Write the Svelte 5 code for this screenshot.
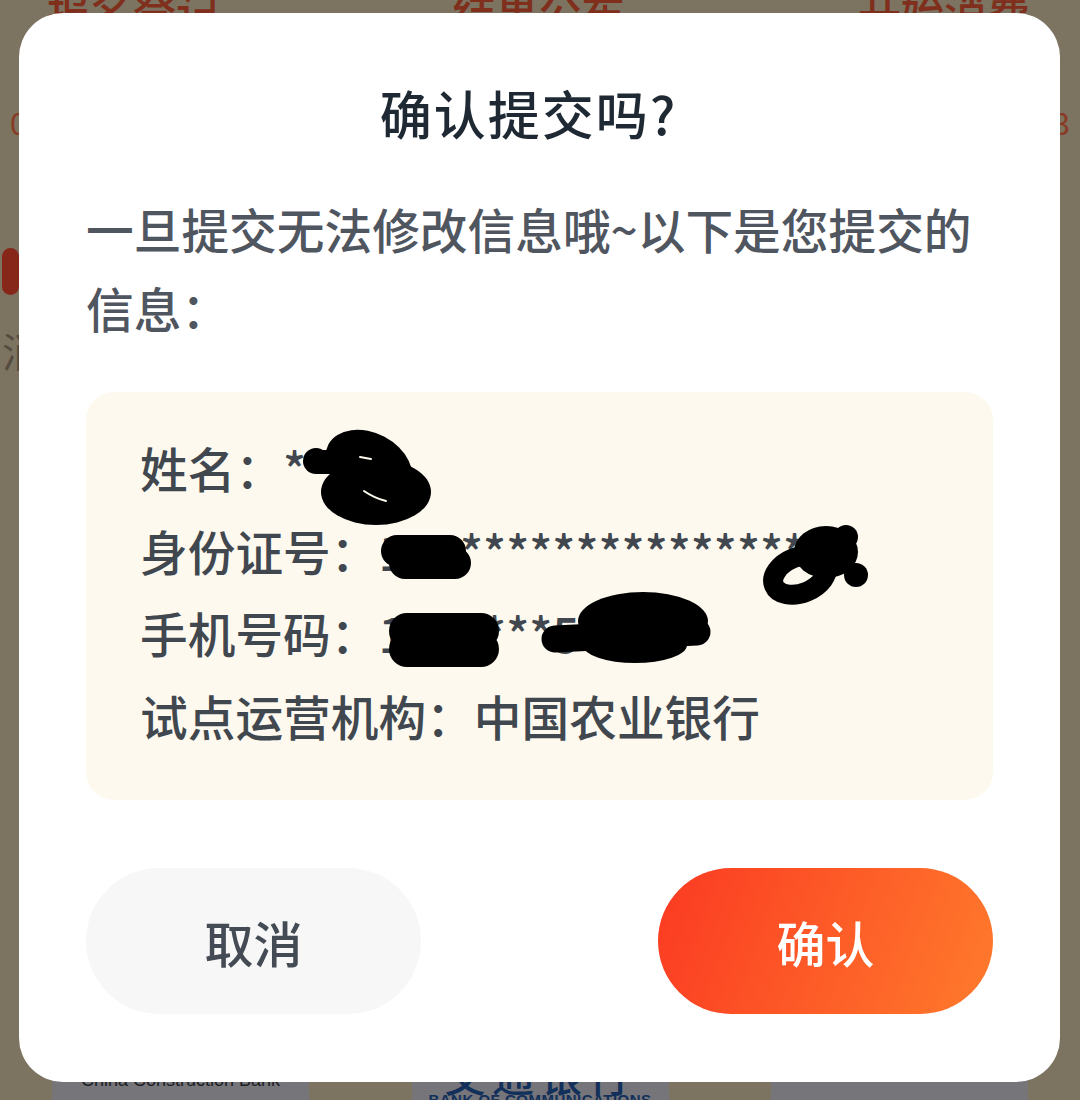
<script>
	let steps = ["报名登记", "结果公布", "开始消费"];
	let rows = [
		{ label: "姓名：", value: "*" },
		{ label: "身份证号：", value: "100***************0" },
		{ label: "手机号码：", value: "100****5000" },
		{ label: "试点运营机构：", value: "中国农业银行" }
	];
</script>

<div class="page">
	<!-- what shows through behind the dialog -->
	<div class="under">
		<div class="steps">
			{#each steps as step}
				<span>{step}</span>
			{/each}
		</div>
		<div class="dates"><span>0</span><span>3</span></div>
		<div class="pill"></div>
		<div class="side">消</div>
		<div class="banks">
			<div class="bank"><span class="en">China Construction Bank</span></div>
			<div class="bank">
				<span class="cn">交通银行</span>
				<span class="en2">BANK OF COMMUNICATIONS</span>
			</div>
			<div class="bank"></div>
		</div>
	</div>

	<div class="dialog">
		<h1>确认提交吗?</h1>
		<p>一旦提交无法修改信息哦~以下是您提交的信息：</p>
		<div class="info">
			{#each rows as row}
				<div class="row">{row.label}{row.value}</div>
			{/each}
		</div>
		<div class="actions">
			<button class="cancel">取消</button>
			<button class="ok">确认</button>
		</div>
	</div>

	<!-- pen scribbles on top of the screenshot -->
	<svg class="scribble" viewBox="0 0 1080 1100" aria-hidden="true">
		<g fill="#000">
			<circle cx="316" cy="461" r="13" />
			<rect x="316" y="450" width="30" height="24" />
			<ellipse cx="369" cy="466" rx="46" ry="33" transform="rotate(28 369 466)" />
			<ellipse cx="376" cy="492" rx="55" ry="33" />
			<circle cx="856" cy="575" r="12" />
			<ellipse cx="643" cy="621" rx="65" ry="29" />
			<ellipse cx="635" cy="645" rx="52" ry="18" />
			<circle cx="846" cy="537" r="12" />
			<ellipse cx="826" cy="552" rx="32" ry="26" />
		</g>
		<g fill="none" stroke="#000" stroke-linecap="round" stroke-linejoin="round">
			<path stroke-width="32" d="M397 551 L450 551 M405 563 L455 563" />
			<ellipse stroke-width="20" cx="800" cy="575" rx="28" ry="18" transform="rotate(-22 800 575)" />
			<path stroke-width="36" d="M407 631 L481 631 M407 649 L481 649" />
			<path stroke-width="27" d="M555 639 L697 632" />
		</g>
		<g fill="none" stroke="#fdf9ee" stroke-width="2" stroke-linecap="round">
			<path d="M360 457 L371 459" />
			<path d="M364 491 Q374 498 386 501" />
		</g>
	</svg>
</div>

<style>
	:global(body) {
		margin: 0;
	}
	.page {
		position: relative;
		width: 1080px;
		height: 1100px;
		overflow: hidden;
		background: #7c7361;
		font-family: "Noto Sans CJK SC", "Noto Sans", sans-serif;
	}
	.under {
		display: flex;
		flex-direction: column;
		height: 100%;
	}
	.steps {
		display: flex;
		justify-content: space-between;
		padding: 0 50px 0 47px;
		margin-top: -18px;
		font-size: 43px;
		font-weight: 500;
		line-height: 56px;
		color: #7f2f1c;
	}
	.dates {
		display: flex;
		justify-content: space-between;
		padding: 0 10px;
		margin-top: 64px;
		font-size: 30px;
		line-height: 40px;
		color: #8a3a24;
	}
	.pill {
		width: 17px;
		height: 47px;
		margin: 106px 0 0 2px;
		border-radius: 9px;
		background: #86271a;
	}
	.side {
		margin: 30px 0 0 2px;
		font-size: 40px;
		line-height: 50px;
		color: #544c3e;
	}
	.banks {
		display: flex;
		justify-content: space-between;
		margin-top: auto;
		padding: 0 52px;
		height: 40px;
	}
	.bank {
		width: 257px;
		background: #75757a;
		display: flex;
		flex-direction: column;
		align-items: center;
		color: #1d1e22;
	}
	.en {
		margin-top: 11px;
		font-family: "Liberation Sans", sans-serif;
		font-size: 18px;
		line-height: 18px;
	}
	.cn {
		margin-top: -1px;
		font-size: 42px;
		font-weight: 500;
		letter-spacing: 6px;
		line-height: 30px;
		color: #12305a;
	}
	.en2 {
		margin-top: 3px;
		font-family: "Liberation Sans", sans-serif;
		font-size: 15px;
		font-weight: 700;
		line-height: 15px;
		letter-spacing: 0.5px;
		color: #12305a;
		white-space: nowrap;
	}
	.dialog {
		position: absolute;
		left: 19px;
		top: 13px;
		box-sizing: border-box;
		width: 1041px;
		height: 1069px;
		padding: 65px 67px 0;
		border-radius: 44px;
		background: #fff;
		display: flex;
		flex-direction: column;
	}
	h1 {
		margin: 0;
		padding-right: 22px;
		text-align: center;
		font-size: 52px;
		line-height: 70px;
		letter-spacing: 2px;
		font-weight: 500;
		color: #1f2933;
	}
	p {
		margin: 41px 0 0;
		font-size: 47.7px;
		line-height: 79px;
		font-weight: 500;
		color: #50565f;
	}
	.info {
		box-sizing: border-box;
		height: 408px;
		margin-top: 45px;
		padding: 35px 54px;
		border-radius: 28px;
		background: #fdf9ee;
	}
	.row {
		font-size: 47.7px;
		line-height: 82.5px;
		font-weight: 500;
		color: #41474f;
		white-space: nowrap;
	}
	.actions {
		display: flex;
		justify-content: space-between;
		margin-top: 68px;
	}
	button {
		width: 335px;
		height: 146px;
		border: 0;
		border-radius: 73px;
		font-family: inherit;
		font-size: 49px;
		font-weight: 500;
	}
	.cancel {
		background: #f7f7f7;
		color: #444b55;
	}
	.ok {
		background: linear-gradient(110deg, #fb3a22, #ff7b2c);
		color: #fff;
	}
	.scribble {
		position: absolute;
		inset: 0;
		width: 100%;
		height: 100%;
		pointer-events: none;
	}
</style>
